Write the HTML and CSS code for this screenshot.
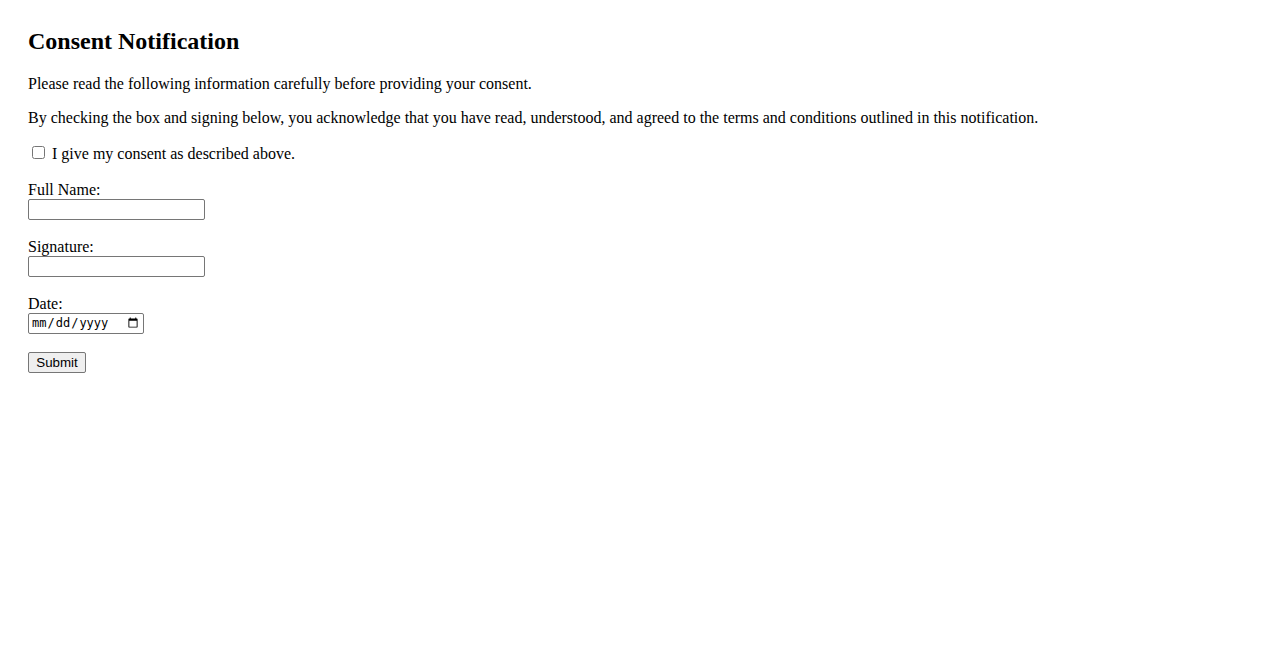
FILE: index.html
```html
<!DOCTYPE html>
<html lang="en">
<head>
<meta charset="utf-8">
<title>Consent Notification</title>
<link rel="stylesheet" href="styles.css">
</head>
<body>
<div class="page">
  <h2 class="title">Consent Notification</h2>
  <p>Please read the following information carefully before providing your consent.</p>
  <p>By checking the box and signing below, you acknowledge that you have read, understood, and agreed to the terms and conditions outlined in this notification.</p>
  <form class="form">
    <p class="consent"><input type="checkbox" id="consent"> <label for="consent">I give my consent as described above.</label></p>
    <div class="field">
      <label class="field-label" for="name">Full Name:</label>
      <input class="text-input" type="text" id="name">
    </div>
    <div class="field">
      <label class="field-label" for="sig">Signature:</label>
      <input class="text-input" type="text" id="sig">
    </div>
    <div class="field">
      <label class="field-label" for="date">Date:</label>
      <input class="date-input" type="date" id="date">
    </div>
    <button type="submit" class="submit">Submit</button>
  </form>
</div>
</body>
</html>
```

FILE: styles.css
```css
body {
  margin: 8px;
  font-family: "Liberation Serif", "Times New Roman", serif;
  font-size: 16px;
  color: #000;
  background: #fff;
}
.page {
  padding: 20px;
}
.title {
  margin: 0 0 19.92px;
  font-size: 24px;
}
.consent {
  margin-bottom: 18px;
}
.field {
  margin-bottom: 18px;
}
.field-label {
  display: block;
  line-height: 18px;
}
.text-input {
  display: block;
  box-sizing: border-box;
  width: 177px;
  height: 21px;
  margin: 0;
  border: 1px solid #767676;
  border-radius: 2px;
  padding: 1px 2px;
}
.date-input {
  display: block;
  box-sizing: border-box;
  width: 116px;
  height: 21px;
  margin: 0;
  border: 1px solid #767676;
  border-radius: 2px;
  padding: 1px 2px;
  font-size: 12px;
}
.submit {
  display: block;
  box-sizing: border-box;
  width: 58px;
  height: 21px;
  margin: 0;
  padding: 1px 6px;
  font-family: "Liberation Sans", Arial, sans-serif;
  font-size: 13.33px;
  background: #efefef;
  border: 1px solid #767676;
  border-radius: 2px;
  color: #000;
}
```
